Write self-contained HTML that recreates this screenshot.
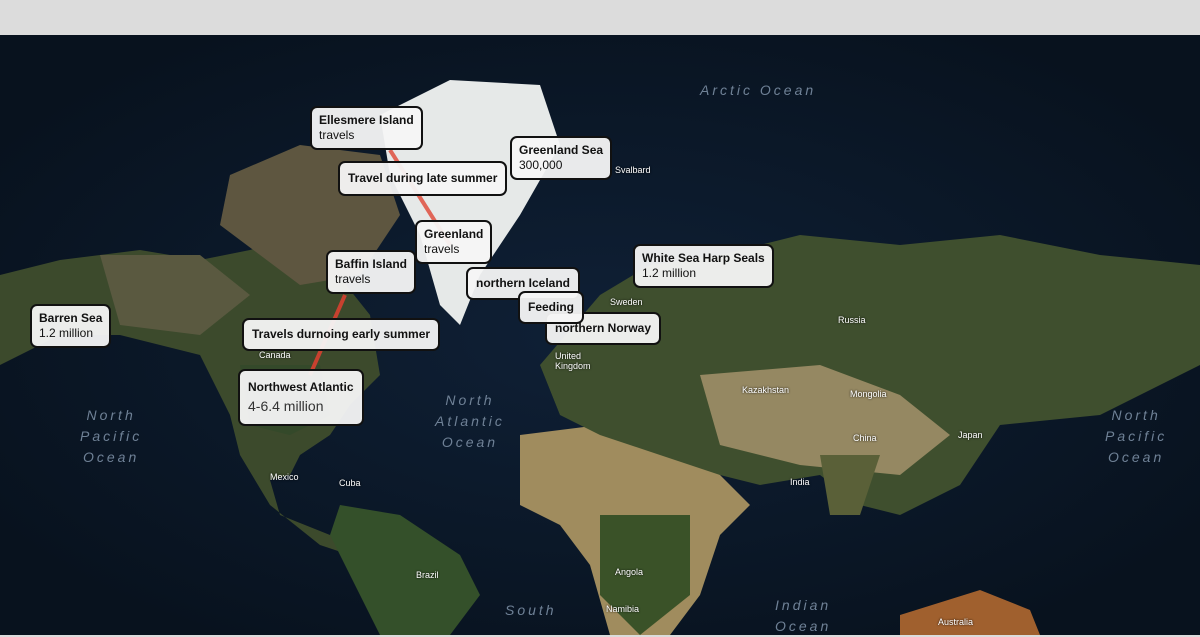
<!DOCTYPE html>
<html><head><meta charset="utf-8"><style>
body{margin:0;width:1200px;height:630px;overflow:hidden;font-family:"Liberation Sans",Arial,sans-serif;background:#dcdcdc}
#map{position:absolute;top:35px;left:0;width:1200px;height:600px;background:#0c1828}
.l{position:absolute;background:rgba(246,246,246,.95);border:2px solid #111;border-radius:7px;padding:5px 7px;font-size:12px;color:#111;line-height:15px;white-space:nowrap}
.l b{font-weight:bold}
.o{position:absolute;color:#6f8196;font-style:italic;font-size:14px;letter-spacing:3px;text-align:center;line-height:21px}
.c{position:absolute;color:#fff;font-size:9px;text-shadow:0 0 2px #000}
</style></head><body>
<div id="map">
<svg width="1200" height="600" style="position:absolute;left:0;top:0">
<defs><radialGradient id="g" cx="50%" cy="50%" r="60%"><stop offset="0" stop-color="#0f2036"/><stop offset="1" stop-color="#08121e"/></radialGradient></defs>
<rect width="1200" height="600" fill="url(#g)"/>
<path d="M0 240 L60 225 L140 215 L200 225 L250 215 L300 200 L330 230 L370 280 L380 340 L350 370 L330 400 L300 420 L290 440 L270 445 L280 480 L330 500 L350 520 L320 510 L270 470 L240 420 L230 380 L200 320 L120 300 L60 300 L0 330 Z" fill="#3c4a2c"/>
<path d="M100 220 L200 220 L250 260 L200 300 L120 290 Z" fill="#5a5940"/>
<path d="M240 330 L320 330 L330 380 L290 400 L250 390 Z" fill="#34492a"/>
<path d="M230 140 L300 110 L380 120 L400 180 L360 240 L300 250 L260 220 L220 190 Z" fill="#5e5640"/>
<path d="M380 80 L450 45 L540 50 L560 110 L520 180 L480 240 L460 290 L440 270 L420 200 L390 140 Z" fill="#e6e9e8"/>
<path d="M340 470 L400 480 L460 520 L480 560 L450 600 L380 600 L350 540 L330 500 Z" fill="#34502a"/>
<path d="M520 400 L600 390 L680 410 L720 440 L750 470 L720 500 L700 560 L670 600 L610 600 L590 530 L560 490 L520 470 Z" fill="#a08c5e"/>
<path d="M600 480 L690 480 L690 560 L640 600 L600 560 Z" fill="#3a5228"/>
<path d="M540 330 L600 260 L650 230 L720 220 L800 200 L900 210 L1000 200 L1100 220 L1200 230 L1200 330 L1100 380 L1000 390 L960 450 L900 480 L860 470 L820 440 L760 450 L720 440 L660 420 L600 400 L560 380 Z" fill="#3f4f2e"/>
<path d="M700 340 L820 330 L900 360 L950 400 L900 440 L800 430 L720 410 Z" fill="#958862"/>
<path d="M820 420 L880 420 L860 480 L830 480 Z" fill="#5a6038"/>
<path d="M900 580 L980 555 L1030 575 L1040 600 L900 600 Z" fill="#a0602e"/>
<path d="M390 115 L450 210" stroke="#e05040" stroke-width="4" opacity=".85"/>
<path d="M345 260 L310 340" stroke="#e04030" stroke-width="4" opacity=".85"/>
</svg>
<div class="o" style="left:700px;top:45px">Arctic Ocean</div>
<div class="o" style="left:80px;top:370px">North<br>Pacific<br>Ocean</div>
<div class="o" style="left:1105px;top:370px">North<br>Pacific<br>Ocean</div>
<div class="o" style="left:435px;top:355px">North<br>Atlantic<br>Ocean</div>
<div class="o" style="left:505px;top:565px">South</div>
<div class="o" style="left:775px;top:560px">Indian<br>Ocean</div>
<div class="c" style="left:259px;top:315px">Canada</div>
<div class="c" style="left:555px;top:316px">United<br>Kingdom</div>
<div class="c" style="left:838px;top:280px">Russia</div>
<div class="c" style="left:850px;top:354px">Mongolia</div>
<div class="c" style="left:853px;top:398px">China</div>
<div class="c" style="left:958px;top:395px">Japan</div>
<div class="c" style="left:742px;top:350px">Kazakhstan</div>
<div class="c" style="left:790px;top:442px">India</div>
<div class="c" style="left:615px;top:532px">Angola</div>
<div class="c" style="left:339px;top:443px">Cuba</div>
<div class="c" style="left:270px;top:437px">Mexico</div>
<div class="c" style="left:416px;top:535px">Brazil</div>
<div class="c" style="left:606px;top:569px">Namibia</div>
<div class="c" style="left:938px;top:582px">Australia</div>
<div class="c" style="left:615px;top:130px">Svalbard</div>
<div class="c" style="left:610px;top:262px">Sweden</div>
</div>
<div class="l" style="left:310px;top:106px"><b>Ellesmere Island</b><br>travels</div>
<div class="l" style="left:338px;top:161px;padding:8px 8px"><b>Travel during late summer</b></div>
<div class="l" style="left:510px;top:136px"><b>Greenland Sea</b><br>300,000</div>
<div class="l" style="left:415px;top:220px"><b>Greenland</b><br>travels</div>
<div class="l" style="left:326px;top:250px"><b>Baffin Island</b><br>travels</div>
<div class="l" style="left:466px;top:267px;padding:7px 8px"><b>northern Iceland</b></div>
<div class="l" style="left:633px;top:244px"><b>White Sea Harp Seals</b><br>1.2 million</div>
<div class="l" style="left:545px;top:312px;padding:7px 8px"><b>northern Norway</b></div>
<div class="l" style="left:518px;top:291px;padding:7px 8px"><b>Feeding</b></div>
<div class="l" style="left:30px;top:304px"><b>Barren Sea</b><br>1.2 million</div>
<div class="l" style="left:242px;top:318px;padding:7px 8px"><b>Travels durnoing early summer</b></div>
<div class="l" style="left:238px;top:369px;padding:7px 8px;line-height:19px"><b>Northwest Atlantic</b><br><span style="font-size:14px;color:#333">4-6.4 million</span></div>
</body></html>
